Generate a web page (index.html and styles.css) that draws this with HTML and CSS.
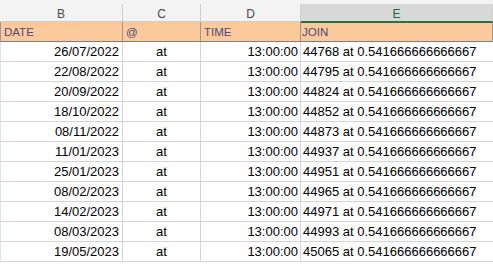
FILE: index.html
```html
<!DOCTYPE html>
<html lang="en">

<head>
  <meta charset="UTF-8" />
  <meta name="viewport" content="width=device-width, initial-scale=1.0" />
  <link rel="stylesheet" href="styles.css">
  <title>Sheet</title>
</head>

<body>
  <div class="top-strip"></div>
  <div class="sheet">
    <div class="col-head">B</div>
    <div class="col-head">C</div>
    <div class="col-head">D</div>
    <div class="col-head selected">E</div>

    <div class="cell head">DATE</div>
    <div class="cell head">@</div>
    <div class="cell head">TIME</div>
    <div class="cell head selected">JOIN</div>

    <div class="cell date">26/07/2022</div><div class="cell at">at</div><div class="cell time">13:00:00</div><div class="cell join">44768 at 0.541666666666667</div>
    <div class="cell date">22/08/2022</div><div class="cell at">at</div><div class="cell time">13:00:00</div><div class="cell join">44795 at 0.541666666666667</div>
    <div class="cell date">20/09/2022</div><div class="cell at">at</div><div class="cell time">13:00:00</div><div class="cell join">44824 at 0.541666666666667</div>
    <div class="cell date">18/10/2022</div><div class="cell at">at</div><div class="cell time">13:00:00</div><div class="cell join">44852 at 0.541666666666667</div>
    <div class="cell date">08/11/2022</div><div class="cell at">at</div><div class="cell time">13:00:00</div><div class="cell join">44873 at 0.541666666666667</div>
    <div class="cell date">11/01/2023</div><div class="cell at">at</div><div class="cell time">13:00:00</div><div class="cell join">44937 at 0.541666666666667</div>
    <div class="cell date">25/01/2023</div><div class="cell at">at</div><div class="cell time">13:00:00</div><div class="cell join">44951 at 0.541666666666667</div>
    <div class="cell date">08/02/2023</div><div class="cell at">at</div><div class="cell time">13:00:00</div><div class="cell join">44965 at 0.541666666666667</div>
    <div class="cell date">14/02/2023</div><div class="cell at">at</div><div class="cell time">13:00:00</div><div class="cell join">44971 at 0.541666666666667</div>
    <div class="cell date">08/03/2023</div><div class="cell at">at</div><div class="cell time">13:00:00</div><div class="cell join">44993 at 0.541666666666667</div>
    <div class="cell date">19/05/2023</div><div class="cell at">at</div><div class="cell time">13:00:00</div><div class="cell join">45065 at 0.541666666666667</div>
  </div>
</body>

</html>
```

FILE: styles.css
```css
* {
  box-sizing: border-box;
  padding: 0;
  margin: 0;
}

html,
body {
  overflow: hidden;
}

body {
  background-color: #ffffff;
  font-family: "Liberation Sans", Arial, sans-serif;
  color: #000000;
  width: 493px;
  height: 264px;
}

.top-strip {
  height: 4px;
  background-color: #f3f3f3;
}

.sheet {
  display: grid;
  grid-template-columns: 123px 78px 100px 1fr;
  grid-template-rows: 18px 20px;
  grid-auto-rows: 20px;
}

.col-head {
  background-color: #f3f3f3;
  color: #4a4a4a;
  font-size: 12px;
  line-height: 17px;
  padding-top: 2px;
  text-align: center;
  border-right: 1px solid #d0d0d0;
  border-bottom: 1px solid #cfcfcf;
}

.col-head.selected {
  background-color: #d8d8d8;
  color: #1d6b3f;
  border-bottom: 1px solid #217346;
}

.cell {
  border-right: 1px solid #d4d4d4;
  border-bottom: 1px solid #d4d4d4;
  font-size: 13px;
  line-height: 19px;
  white-space: nowrap;
  overflow: hidden;
}

.cell:nth-child(4n + 1) {
  border-left: 1px solid #dbe4f3;
}

.head {
  background-color: #fcca9a;
  color: #50487a;
  font-size: 11.5px;
  line-height: 20px;
  padding-left: 3px;
  border-right-color: #9c9894;
  border-bottom-color: #808080;
}

.cell.head:nth-child(4n + 1) {
  border-left-color: #9a9a9a;
}

.head.selected {
  border-top: 1px solid #217346;
  line-height: 19px;
  padding-left: 1px;
}

.date {
  text-align: right;
  padding-right: 3px;
}

.at {
  text-align: center;
}

.time {
  text-align: right;
  padding-right: 2px;
}

.join {
  padding-left: 2px;
  border-right: none;
}
```
